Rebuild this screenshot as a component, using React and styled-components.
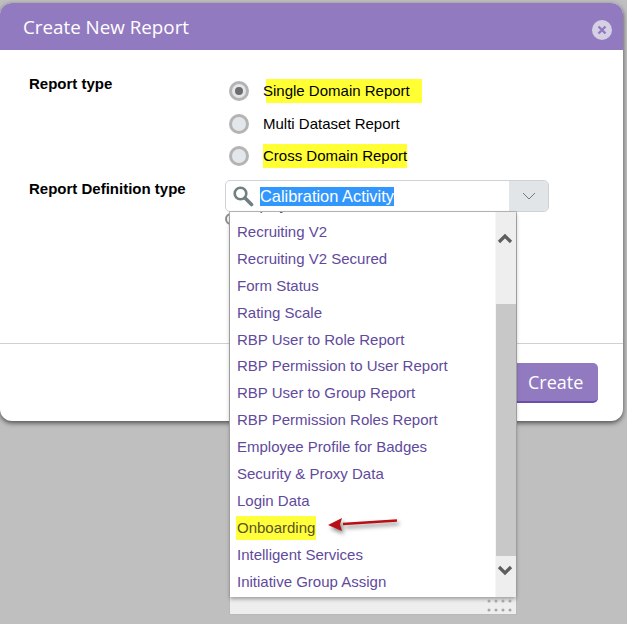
import React from "react";
import styled, { createGlobalStyle } from "styled-components";

const Global = createGlobalStyle`
  html, body { margin: 0; padding: 0; }
  body { background: #bfbfbf; font-family: "Liberation Sans", Arial, sans-serif; width: 627px; height: 624px; overflow: hidden; }
`;
const Page = styled.div`
  width: 627px;
  height: 624px;
  padding-top: 3px;
  box-sizing: border-box;
  background: #bfbfbf;
`;
const Modal = styled.div`
  width: 623px;
  height: 418px;
  display: flex;
  flex-direction: column;
  background: #fff;
  border-radius: 12px;
  box-shadow: 0 2px 5px rgba(0, 0, 0, 0.6);
`;
const Header = styled.header`
  height: 47px;
  flex: none;
  display: flex;
  align-items: center;
  justify-content: space-between;
  padding: 0 11px 0 23px;
  background: #927ac0;
  border-radius: 12px 12px 0 0;
`;
const Title = styled.h1`
  margin: 0;
  font: 400 18.8px "Open Sans", sans-serif;
  color: #fff;
`;
const Close = styled.button`
  width: 20px;
  height: 20px;
  margin-top: 7px;
  padding: 0;
  border: 0;
  border-radius: 50%;
  background: #d6d0e4;
  display: flex;
  align-items: center;
  justify-content: center;
`;
const Form = styled.div`
  flex: 1;
  display: grid;
  grid-template-columns: 196px 1fr;
  grid-template-rows: 105px 1fr;
  padding: 24px 0 0 29px;
  box-sizing: border-box;
`;
const Label = styled.div`
  font: 700 15px/20px "Liberation Sans", Arial, sans-serif;
  color: #000;
`;
const RadioGroup = styled.div`
  display: flex;
  flex-direction: column;
  padding: 1px 0 0 4px;
`;
const RadioRow = styled.label`
  height: 32.5px;
  display: flex;
  align-items: center;
  gap: 14px;
  font: 400 15px "Liberation Sans", Arial, sans-serif;
  color: #000;
`;
const Radio = styled.span`
  width: 20px;
  height: 20px;
  box-sizing: border-box;
  border: 3px solid #b4b4b4;
  border-radius: 50%;
  background: #e3e6ea;
  display: flex;
  align-items: center;
  justify-content: center;
  flex: none;
  &::after {
    content: "";
    width: 8px;
    height: 8px;
    border-radius: 50%;
    background: ${(p) => (p.$checked ? "#6d6d6d" : "transparent")};
  }
`;
const Marked = styled.span`
  line-height: 24px;
  background: linear-gradient(#ffff33, #ffff33) ${(p) => p.$inset || 0}px 0 / calc(100% - ${(p) => p.$inset || 0}px) 100% no-repeat;
  padding-right: ${(p) => p.$pad || 0}px;
`;
const Combo = styled.div`
  position: relative;
  width: 324px;
  height: 32px;
  margin-top: 1px;
  box-sizing: border-box;
  border: 1px solid #ced2d6;
  border-radius: 5px;
  display: flex;
  align-items: center;
  background: #fff;
`;
const SearchIcon = styled.span`
  width: 22px;
  height: 22px;
  margin-left: 6px;
  display: flex;
`;
const Selected = styled.span`
  margin-left: 6px;
  font: 400 16.4px/19px "Liberation Sans", Arial, sans-serif;
  background: #3297fd;
  color: #fff;
`;
const ComboToggle = styled.span`
  margin-left: auto;
  width: 39px;
  height: 100%;
  background: #e2e5e8;
  border-radius: 0 4px 4px 0;
  display: flex;
  align-items: center;
  justify-content: center;
`;
const BackRadio = styled.span`
  display: block;
  width: 12px;
  height: 12px;
  margin-top: 1px;
  box-sizing: border-box;
  border: 2px solid #8d8d8d;
  border-radius: 50%;
`;
const Dropdown = styled.div`
  position: absolute;
  left: 3px;
  top: 30px;
  width: 288px;
  height: 404px;
  box-sizing: border-box;
  border: 1px solid #b9b9b9;
  background: #eeeeee;
  z-index: 2;
`;
const ListArea = styled.div`
  display: flex;
  height: 385px;
  background: #fff;
  box-shadow: 0 2px 4px rgba(0, 0, 0, 0.35);
`;
const List = styled.ul`
  flex: 1;
  margin: 0;
  padding: 0;
  list-style: none;
  overflow: hidden;
`;
const Item = styled.li`
  height: 26.92px;
  line-height: 26.92px;
  padding-left: 7px;
  font-size: 15px;
  color: #5f4a9c;
  white-space: nowrap;
  &:first-child { margin-top: -20px; }
`;
const OnboardingMark = styled.span`
  display: inline-block;
  height: 24px;
  line-height: 24px;
  margin-left: -1px;
  padding: 0 1px;
  background: #ffff3a;
  color: #5b5226;
`;
const Scrollbar = styled.div`
  width: 20px;
  flex: none;
  display: flex;
  flex-direction: column;
  background: #eeeeee;
  border-left: 1px solid #f6f6f6;
`;
const ScrollButton = styled.span`
  height: ${(p) => p.$h}px;
  flex: none;
  display: flex;
  align-items: ${(p) => (p.$end ? "flex-start" : "flex-end")};
  justify-content: center;
  padding: ${(p) => (p.$end ? "9px 2px 0 0" : "0 2px 5px 0")};
  box-sizing: border-box;
`;
const Spacer = styled.span`
  height: ${(p) => p.$h}px;
  flex: none;
`;
const Thumb = styled.span`
  height: 252px;
  flex: none;
  background: #c8c8c8;
`;
const Resizer = styled.div`
  height: 17px;
  display: flex;
  justify-content: flex-end;
  align-items: center;
  padding-right: 2px;
`;
const Arrow = styled.svg`
  position: absolute;
  left: 97px;
  top: 303px;
  overflow: visible;
  filter: drop-shadow(2px 3px 2px rgba(0, 0, 0, 0.5));
`;
const Footer = styled.footer`
  height: 78px;
  flex: none;
  box-sizing: border-box;
  border-top: 1px solid #d0d0d0;
  padding: 19px 25px 0 0;
  display: flex;
  justify-content: flex-end;
  align-items: flex-start;
`;
const CreateButton = styled.button`
  width: 100px;
  height: 40px;
  border: 0;
  border-bottom: 2px solid #6a50a8;
  border-radius: 5px;
  background: #927ac0;
  color: #fff;
  font: 400 18px "Open Sans", sans-serif;
  padding: 0 0 0 30px;
  text-align: left;
`;

const items = [
  "Employee Data", "Recruiting V2", "Recruiting V2 Secured", "Form Status", "Rating Scale",
  "RBP User to Role Report", "RBP Permission to User Report", "RBP User to Group Report",
  "RBP Permission Roles Report", "Employee Profile for Badges", "Security & Proxy Data",
  "Login Data", "Onboarding", "Intelligent Services", "Initiative Group Assign",
];

const dots = [];
for (let r = 0; r < 2; r++) for (let c = 0; c < 4; c++) dots.push([3 + c * 7, 3 + r * 9]);

export default function App() {
  return (
    <Page>
      <Global />
      <Modal>
        <Header>
          <Title>Create New Report</Title>
          <Close aria-label="Close">
            <svg width="10" height="10" viewBox="0 0 10 10">
              <path d="M1.5 1.5 8.5 8.5M8.5 1.5 1.5 8.5" stroke="#927ac0" strokeWidth="2.4" />
            </svg>
          </Close>
        </Header>
        <Form>
          <Label>Report type</Label>
          <RadioGroup>
            <RadioRow>
              <Radio $checked />
              <Marked $inset={3} $pad={12}>Single Domain Report</Marked>
            </RadioRow>
            <RadioRow>
              <Radio />
              Multi Dataset Report
            </RadioRow>
            <RadioRow>
              <Radio />
              <Marked>Cross Domain Report</Marked>
            </RadioRow>
          </RadioGroup>
          <Label>Report Definition type</Label>
          <div>
            <Combo>
              <SearchIcon>
                <svg width="22" height="22" viewBox="0 0 22 22" fill="none">
                  <circle cx="8.5" cy="8.5" r="5.8" stroke="#6f7f82" strokeWidth="2.6" />
                  <path d="M13 13 19.5 19.5" stroke="#6f7f82" strokeWidth="3.6" strokeLinecap="round" />
                </svg>
              </SearchIcon>
              <Selected>Calibration Activity</Selected>
              <ComboToggle>
                <svg width="14" height="8" viewBox="0 0 14 8" fill="none">
                  <path d="M1 1 7 7 13 1" stroke="#777" strokeWidth="1" />
                </svg>
              </ComboToggle>
              <Dropdown>
                <ListArea>
                  <List>
                    {items.map((t) => (
                      <Item key={t}>{t === "Onboarding" ? <OnboardingMark>{t}</OnboardingMark> : t}</Item>
                    ))}
                  </List>
                  <Scrollbar>
                    <ScrollButton $h={37}>
                      <svg width="16" height="11" viewBox="0 0 16 11" fill="none">
                        <path d="M2 9 8 3 14 9" stroke="#5e5e5e" strokeWidth="3.2" />
                      </svg>
                    </ScrollButton>
                    <Spacer $h={55} />
                    <Thumb />
                    <ScrollButton $h={41} $end>
                      <svg width="16" height="11" viewBox="0 0 16 11" fill="none">
                        <path d="M2 2 8 8 14 2" stroke="#5e5e5e" strokeWidth="3.2" />
                      </svg>
                    </ScrollButton>
                  </Scrollbar>
                </ListArea>
                <Resizer>
                  <svg width="28" height="16" viewBox="0 0 28 16">
                    {dots.map(([x, y]) => (
                      <circle key={`${x}-${y}`} cx={x} cy={y} r="1.5" fill="#a6a6a6" />
                    ))}
                  </svg>
                </Resizer>
                <Arrow width="72" height="20" viewBox="0 0 72 20">
                  <path d="M70 5.5 16 9" stroke="#b90f14" strokeWidth="2.4" fill="none" />
                  <path d="M1 10 15 3 13 9.5 15 16Z" fill="#b90f14" />
                </Arrow>
              </Dropdown>
            </Combo>
            <BackRadio />
          </div>
        </Form>
        <Footer>
          <CreateButton>Create</CreateButton>
        </Footer>
      </Modal>
    </Page>
  );
}
